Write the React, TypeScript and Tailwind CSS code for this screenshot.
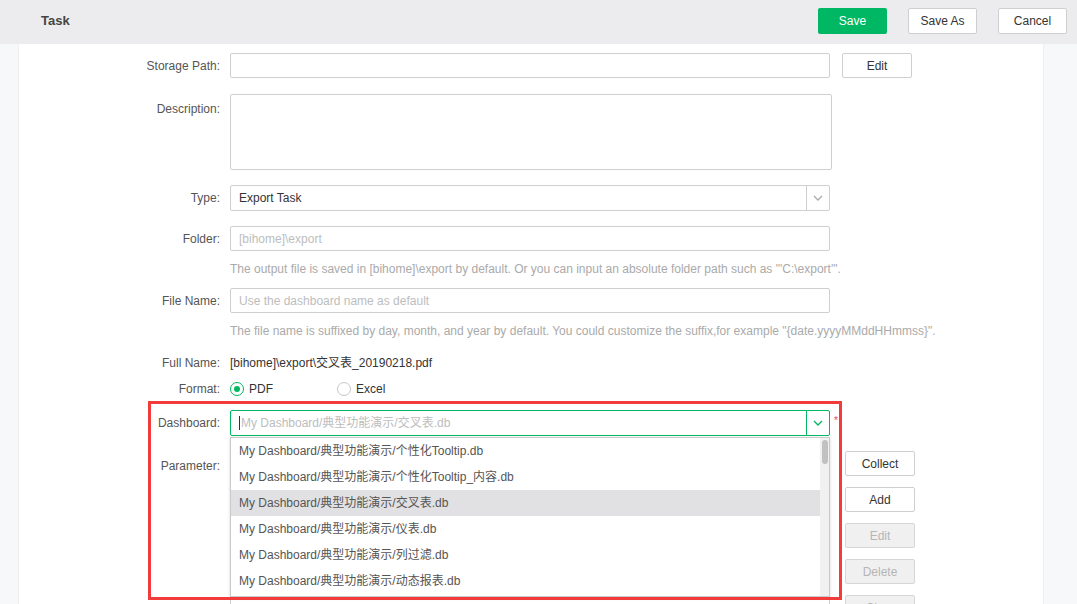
const font = { fontFamily: '"Liberation Sans", Arial, "Noto Sans CJK SC", sans-serif' };

const dashboards = [
    "My Dashboard/典型功能演示/个性化Tooltip.db",
    "My Dashboard/典型功能演示/个性化Tooltip_内容.db",
    "My Dashboard/典型功能演示/交叉表.db",
    "My Dashboard/典型功能演示/仪表.db",
    "My Dashboard/典型功能演示/列过滤.db",
    "My Dashboard/典型功能演示/动态报表.db",
];

function Chevron({ color }: { color: string }) {
    return (
        <svg width="10" height="6" viewBox="0 0 10 6" fill="none">
            <polyline points="1,1 5,5 9,1" stroke={color} strokeWidth="1.3" />
        </svg>
    );
}

function Label({ children, top }: { children: string; top?: boolean }) {
    return (
        <div
            className={
                "w-[211px] shrink-0 pr-[10px] text-right text-[12px] text-[#555] " +
                (top ? "pt-[6px]" : "")
            }
        >
            {children}
        </div>
    );
}

function SideButton({ children, disabled }: { children: string; disabled?: boolean }) {
    return (
        <div
            className={
                "flex h-[25px] w-[70px] items-center justify-center rounded-[2px] border text-[12px] " +
                (disabled
                    ? "border-[#d6d6d6] bg-[#f0f0f0] text-[#b5b5b5]"
                    : "border-[#cfcfcf] bg-white text-[#333]")
            }
        >
            {children}
        </div>
    );
}

export default function App() {
    return (
        <div className="h-[604px] w-full overflow-hidden bg-white" style={font}>
            <div className="flex h-[44px] items-center bg-[#ececee] pb-[2px] pl-[41px] pr-[10px]">
                <div className="flex-1 text-[13px] font-bold text-[#444]">Task</div>
                <div className="flex items-center">
                    <div className="flex h-[26px] w-[69px] items-center justify-center rounded-[2px] bg-[#00b863] text-[12px] text-white">
                        Save
                    </div>
                    <div className="ml-[21px] flex h-[26px] w-[69px] items-center justify-center rounded-[2px] border border-[#cfcfcf] bg-white text-[12px] text-[#333]">
                        Save As
                    </div>
                    <div className="ml-[21px] flex h-[26px] w-[69px] items-center justify-center rounded-[2px] border border-[#cfcfcf] bg-white text-[12px] text-[#333]">
                        Cancel
                    </div>
                </div>
            </div>

            <div className="flex h-[560px]">
                <div className="w-[19px] shrink-0 border-r border-[#eeeff1] bg-[#f7f8fa]" />
                <div className="relative flex-1 bg-white">
                    <div className="flex items-center pt-[9px]">
                        <Label>Storage Path:</Label>
                        <div className="h-[25px] w-[600px] rounded-[2px] border border-[#cfcfcf]" />
                        <div className="ml-[12px]">
                            <SideButton>Edit</SideButton>
                        </div>
                    </div>

                    <div className="mt-[16px] flex items-start">
                        <Label top>Description:</Label>
                        <div className="h-[76px] w-[602px] rounded-[2px] border border-[#cfcfcf]" />
                    </div>

                    <div className="mt-[15px] flex items-center">
                        <Label>Type:</Label>
                        <div className="flex h-[26px] w-[600px] items-center rounded-[2px] border border-[#cfcfcf]">
                            <div className="flex-1 pl-[8px] text-[12px] text-[#333]">Export Task</div>
                            <div className="flex h-full w-[23px] items-center justify-center border-l border-[#cfcfcf]">
                                <Chevron color="#aaa" />
                            </div>
                        </div>
                    </div>

                    <div className="mt-[15px] flex items-center">
                        <Label>Folder:</Label>
                        <div className="flex h-[25px] w-[600px] items-center rounded-[2px] border border-[#cfcfcf] pl-[8px] text-[12px] text-[#bdbdbd]">
                            [bihome]\export
                        </div>
                    </div>
                    <div className="ml-[211px] mt-[9px] h-[18px] text-[12px] leading-[18px] text-[#aaa]">
                        The output file is saved in [bihome]\export by default. Or you can input an absolute folder path such as "'C:\export'".
                    </div>

                    <div className="mt-[10px] flex items-center">
                        <Label>File Name:</Label>
                        <div className="flex h-[25px] w-[600px] items-center rounded-[2px] border border-[#cfcfcf] pl-[8px] text-[12px] text-[#bdbdbd]">
                            Use the dashboard name as default
                        </div>
                    </div>
                    <div className="ml-[211px] mt-[9px] h-[18px] text-[12px] leading-[18px] text-[#aaa]">
                        The file name is suffixed by day, month, and year by default. You could customize the suffix,for example "{"{"}date.yyyyMMddHHmmss{"}"}".
                    </div>

                    <div className="mt-[14px] flex h-[18px] items-center">
                        <Label>Full Name:</Label>
                        <div className="text-[12px] text-[#333]">[bihome]\export\交叉表_20190218.pdf</div>
                    </div>

                    <div className="mt-[8px] flex h-[18px] items-center">
                        <Label>Format:</Label>
                        <div className="flex items-center text-[12px] text-[#333]">
                            <span className="flex h-[14px] w-[14px] items-center justify-center rounded-full border border-[#00b863]">
                                <span className="h-[6px] w-[6px] rounded-full bg-[#00b863]" />
                            </span>
                            <span className="ml-[5px]">PDF</span>
                            <span className="ml-[64px] h-[14px] w-[14px] rounded-full border border-[#c6c6c6]" />
                            <span className="ml-[5px]">Excel</span>
                        </div>
                    </div>

                    <div className="mt-[12px] flex items-center">
                        <Label>Dashboard:</Label>
                        <div className="relative">
                            <div className="flex h-[26px] w-[600px] items-center rounded-[2px] border border-[#00b863]">
                                <div className="flex flex-1 items-center pl-[8px] text-[12px] text-[#bdbdbd]">
                                    <span className="mr-[1px] h-[14px] w-[1px] bg-[#333]" />
                                    My Dashboard/典型功能演示/交叉表.db
                                </div>
                                <div className="flex h-full w-[23px] items-center justify-center border-l border-[#00b863]">
                                    <Chevron color="#00b863" />
                                </div>
                            </div>
                            <div className="absolute left-0 top-[27px] z-10 h-[160px] w-[600px] overflow-hidden border border-[#c9c9c9] bg-white shadow-[0_1px_3px_rgba(0,0,0,0.15)]">
                                {dashboards.map((d, i) => (
                                    <div
                                        key={d}
                                        className={
                                            "flex h-[26px] w-[590px] items-center pl-[8px] text-[12px] text-[#555] " +
                                            (i === 2 ? "bg-[#e1e1e3]" : "")
                                        }
                                    >
                                        {d}
                                    </div>
                                ))}
                                <div className="absolute right-0 top-0 h-full w-[9px] bg-[#f1f1f1]">
                                    <div className="mx-auto mt-[2px] h-[24px] w-[6px] rounded-[3px] bg-[#c1c1c1]" />
                                </div>
                            </div>
                        </div>
                        <span className="ml-[4px] self-start pt-[6px] text-[10px] leading-none text-[#f04848]">*</span>
                    </div>

                    <div className="mt-[15px] flex items-start">
                        <Label top>Parameter:</Label>
                        <div className="h-[200px] w-[600px] rounded-[2px] border border-[#cfcfcf]" />
                        <div className="ml-[15px] flex flex-col gap-[11px]">
                            <SideButton>Collect</SideButton>
                            <SideButton>Add</SideButton>
                            <SideButton disabled>Edit</SideButton>
                            <SideButton disabled>Delete</SideButton>
                            <SideButton disabled>Clear</SideButton>
                        </div>
                    </div>

                    <div className="pointer-events-none absolute left-[129px] top-[357px] z-20 h-[199px] w-[694px] border-[3px] border-[#f23c3c]" />
                </div>
                <div className="w-[34px] shrink-0 border-l border-[#eeeff1] bg-[#f7f8fa]" />
            </div>
        </div>
    );
}
